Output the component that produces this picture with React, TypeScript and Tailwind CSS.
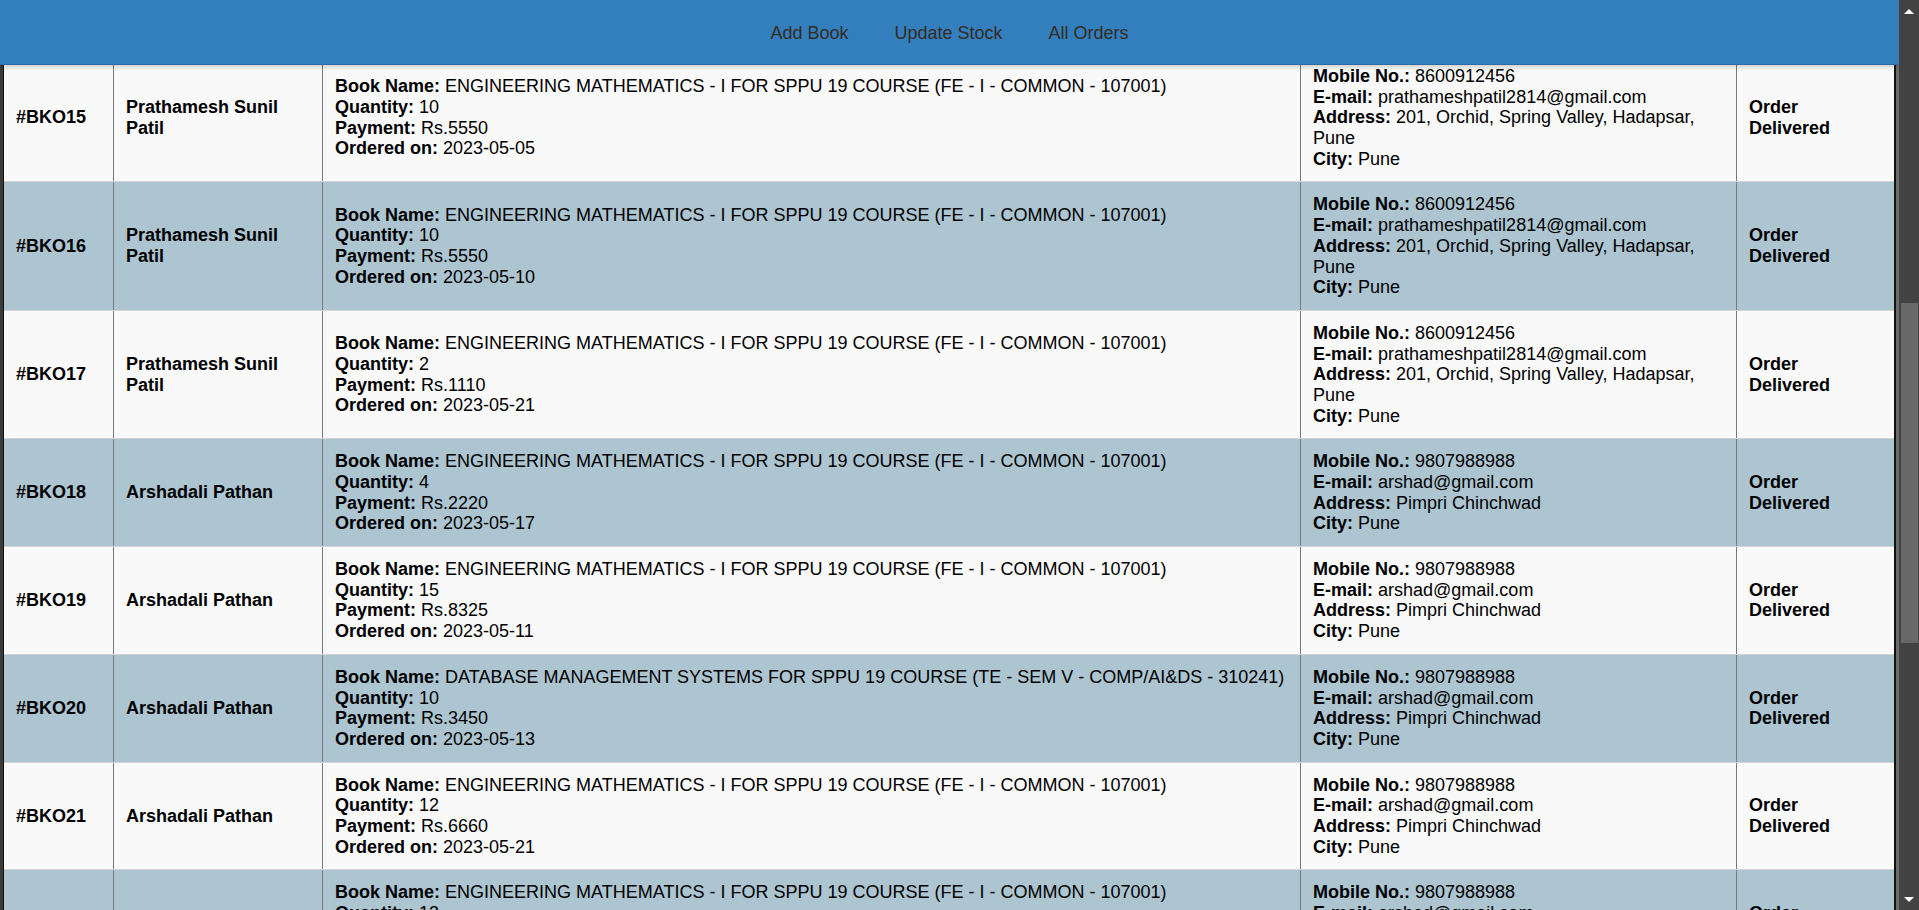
type Order = {
  id: string;
  name: string;
  book: string;
  quantity: number;
  payment: string;
  orderedOn: string;
  mobile: string;
  email: string;
  address: string;
  city: string;
  status: string;
};

const ENG_MATHS = 'ENGINEERING MATHEMATICS - I FOR SPPU 19 COURSE (FE - I - COMMON - 107001)';
const DBMS = 'DATABASE MANAGEMENT SYSTEMS FOR SPPU 19 COURSE (TE - SEM V - COMP/AI&DS - 310241)';

const prathamesh = {
  name: 'Prathamesh Sunil Patil',
  mobile: '8600912456',
  email: 'prathameshpatil2814@gmail.com',
  address: '201, Orchid, Spring Valley, Hadapsar, Pune',
  city: 'Pune',
};

const arshad = {
  name: 'Arshadali Pathan',
  mobile: '9807988988',
  email: 'arshad@gmail.com',
  address: 'Pimpri Chinchwad',
  city: 'Pune',
};

const orders: Order[] = [
  { id: '#BKO15', ...prathamesh, book: ENG_MATHS, quantity: 10, payment: 'Rs.5550', orderedOn: '2023-05-05', status: 'Order Delivered' },
  { id: '#BKO16', ...prathamesh, book: ENG_MATHS, quantity: 10, payment: 'Rs.5550', orderedOn: '2023-05-10', status: 'Order Delivered' },
  { id: '#BKO17', ...prathamesh, book: ENG_MATHS, quantity: 2, payment: 'Rs.1110', orderedOn: '2023-05-21', status: 'Order Delivered' },
  { id: '#BKO18', ...arshad, book: ENG_MATHS, quantity: 4, payment: 'Rs.2220', orderedOn: '2023-05-17', status: 'Order Delivered' },
  { id: '#BKO19', ...arshad, book: ENG_MATHS, quantity: 15, payment: 'Rs.8325', orderedOn: '2023-05-11', status: 'Order Delivered' },
  { id: '#BKO20', ...arshad, book: DBMS, quantity: 10, payment: 'Rs.3450', orderedOn: '2023-05-13', status: 'Order Delivered' },
  { id: '#BKO21', ...arshad, book: ENG_MATHS, quantity: 12, payment: 'Rs.6660', orderedOn: '2023-05-21', status: 'Order Delivered' },
  { id: '#BKO22', ...arshad, book: ENG_MATHS, quantity: 13, payment: 'Rs.7215', orderedOn: '2023-05-22', status: 'Order Delivered' },
];

function Field({ label, value }: { label: string; value: string | number }) {
  return (
    <div>
      <b>{label}:</b> {value}
    </div>
  );
}

function OrderRow({ order, striped }: { order: Order; striped: boolean }) {
  const cell = 'flex flex-col justify-center px-3 py-3 border-r border-[#7a7a7a]';
  return (
    <div
      className={
        'grid grid-cols-[110px_209px_978px_436px_157px] border-b border-[#d4d4d4] ' +
        (striped ? 'bg-[#acc5d0]' : 'bg-[#f9f9f9]')
      }
    >
      <div className={cell + ' font-bold'}>{order.id}</div>
      <div className={cell + ' font-bold'}>{order.name}</div>
      <div className={cell}>
        <Field label="Book Name" value={order.book} />
        <Field label="Quantity" value={order.quantity} />
        <Field label="Payment" value={order.payment} />
        <Field label="Ordered on" value={order.orderedOn} />
      </div>
      <div className={cell}>
        <Field label="Mobile No." value={order.mobile} />
        <Field label="E-mail" value={order.email} />
        <Field label="Address" value={order.address} />
        <Field label="City" value={order.city} />
      </div>
      <div className="flex flex-col justify-center px-3 py-3 font-bold">{order.status}</div>
    </div>
  );
}

function NavBar() {
  const links = ['Add Book', 'Update Stock', 'All Orders'];
  return (
    <nav className="absolute inset-x-0 top-0 z-10 flex h-[65px] items-center justify-center border-b border-[#2b6ca5] bg-[#337fbd] pt-[2px] shadow-[0_2px_5px_rgba(0,0,0,0.18)]">
      {links.map((link) => (
        <a key={link} className="px-[23px] text-[18px] text-[#352b22]">
          {link}
        </a>
      ))}
    </nav>
  );
}

function ScrollBar() {
  return (
    <div className="flex w-[20px] flex-col items-center bg-[#424242]">
      <div className="mt-[9px] h-0 w-0 border-x-[5px] border-b-[5px] border-x-transparent border-b-white" />
      <div className="mt-[289px] h-[340px] w-[17px] bg-[#686868]" />
      <div className="mt-auto mb-[8px] h-0 w-0 border-x-[5px] border-t-[5px] border-x-transparent border-t-white" />
    </div>
  );
}

export default function App() {
  return (
    <div className="flex h-[910px] w-[1919px] overflow-hidden bg-[#3b3b3b] font-['Liberation_Sans',Arial,sans-serif] text-[18px] leading-[1.15] text-black">
      <div className="relative flex-1 overflow-hidden">
        <NavBar />
        <div className="flex pt-[54px]">
          <div className="w-[3px] bg-[#3b3b3b]" />
          <div className="flex-1 border-l border-r-2 border-[#111]">
            {orders.map((order, i) => (
              <OrderRow key={order.id} order={order} striped={i % 2 === 1} />
            ))}
          </div>
          <div className="w-[3px] bg-[#6b6b6b]" />
        </div>
      </div>
      <ScrollBar />
    </div>
  );
}
